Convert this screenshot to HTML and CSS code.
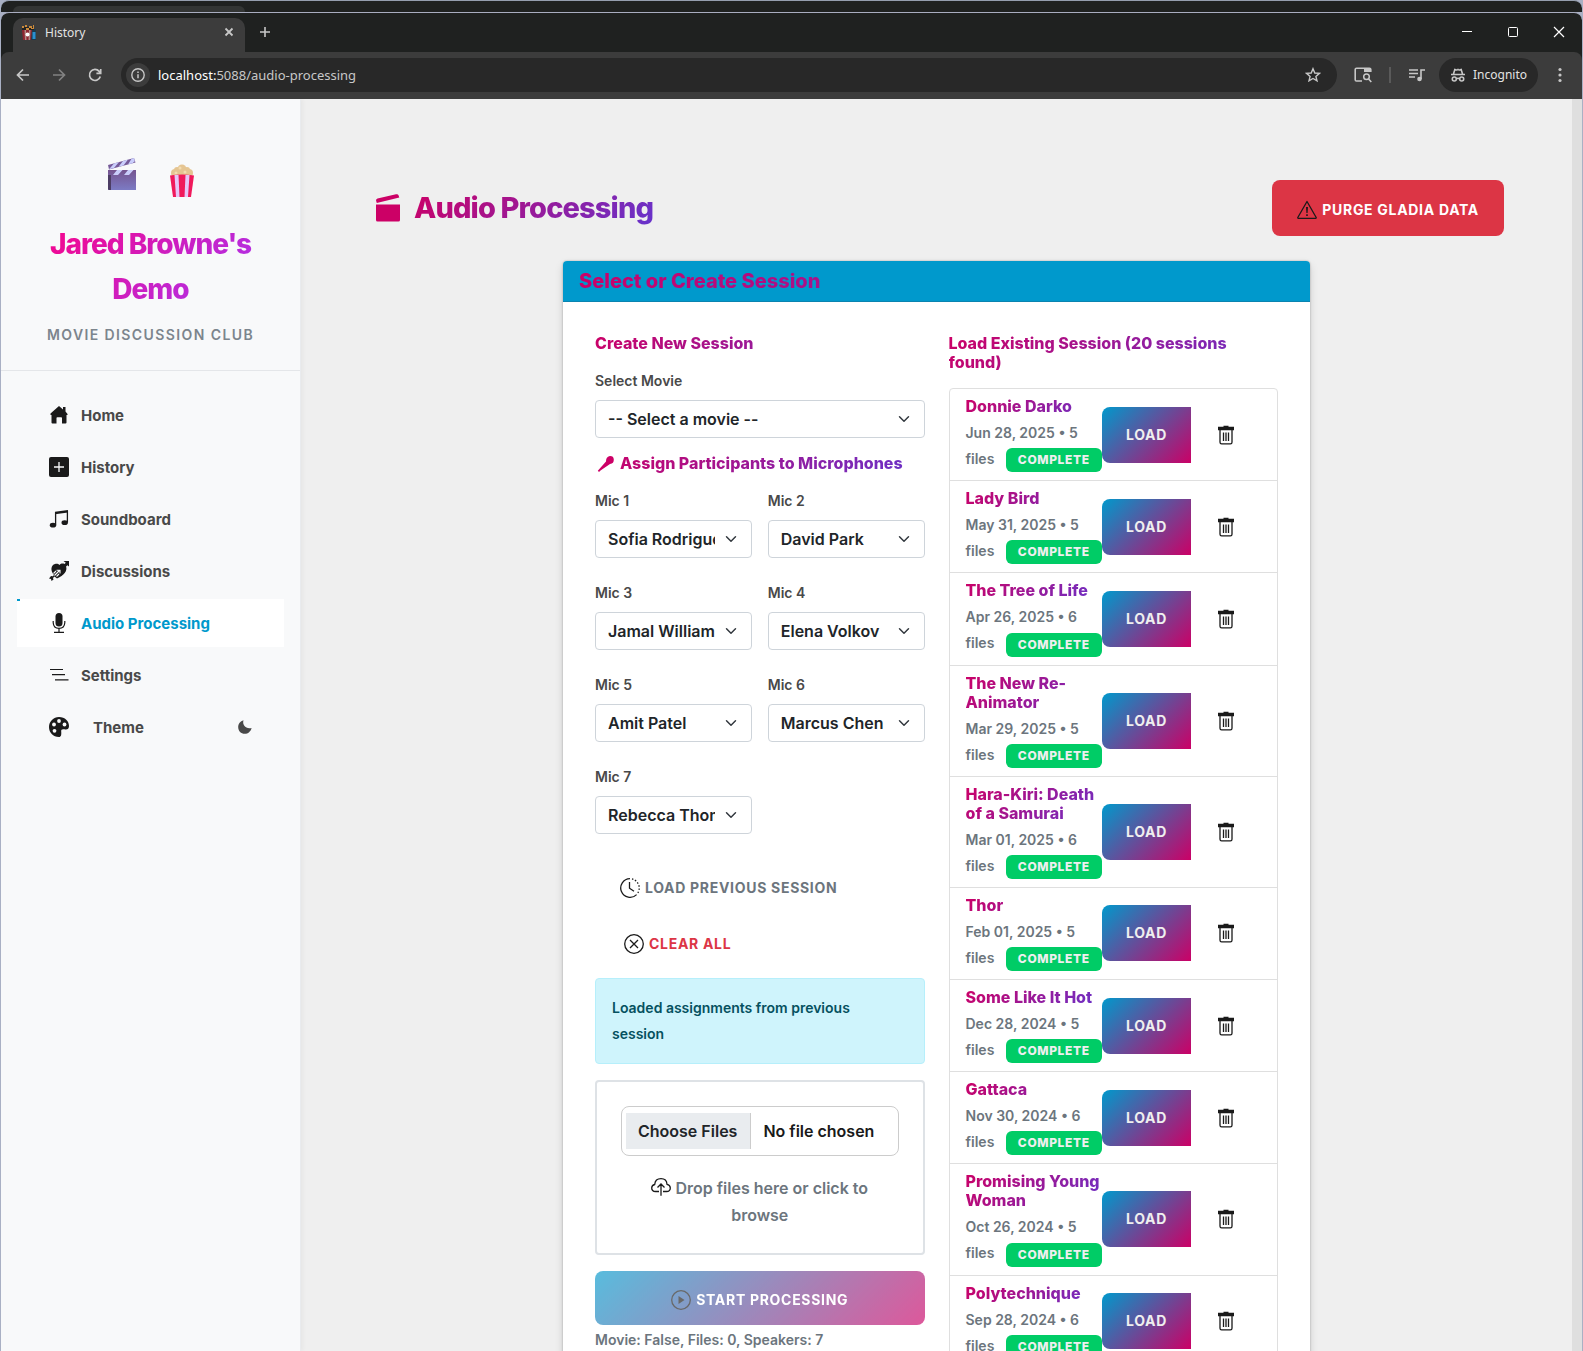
FILE: index.html
```html
<!DOCTYPE html>
<html lang="en">
<head>
<meta charset="utf-8">
<meta name="viewport" content="width=device-width, initial-scale=1">
<title>History</title>
<link rel="stylesheet" href="styles.css">
</head>
<body>
<svg class="sprite" aria-hidden="true">
  <symbol id="trash" viewBox="0 0 20 20">
    <path fill="#1a1a1a" d="M7.500 .800h5v1H18v3.400H2V1.800h5.500z"/>
    <path fill="none" stroke="#1a1a1a" stroke-width="1.300" d="M4 5v12.200q0 1.600 1.600 1.600h8.800q1.600 0 1.600-1.600V5M7.500 7.500v8.500M10 7.500v8.500M12.500 7.500v8.500"/>
  </symbol>
</svg>

<div class="back-window"><div class="back-tab"></div></div>
<div class="window">
  <header class="tabstrip">
    <div class="tab">
      <svg class="i16" viewBox="0 0 16 16"><path fill="#1c3a4c" d="M10 5h5v11h-5z"/><path fill="#2a8fd0" d="M11.500 8h3v7h-3z"/><path fill="#8e2630" d="M1 6h10l-1 10H2z"/><path fill="#b08a86" d="M3.500 6H5l.5 10H4zM8 6h1.500L9 16H7.500z"/><circle cx="6.500" cy="10.500" r="2" fill="#fff"/><path fill="#222" d="M1 3h12v3H1z"/><path fill="#c98a3c" d="M1 2h2v2H1zM4 1h2v2H4zM5 4h3v2H5zM8 2h3v2H8zM12 1h1v4h-1zM10 4h2v1h-2z"/></svg>
      <span class="tab-title">History</span>
      <button class="bare" aria-label="Close tab"><svg class="i12" viewBox="0 0 12 12"><path class="line" stroke-width="1.800" d="M2.500 2.500l7 7M9.500 2.500l-7 7"/></svg></button>
    </div>
    <button class="bare new-tab" aria-label="New tab"><svg class="i12" viewBox="0 0 12 12"><path class="line" stroke-width="1.600" d="M6 1v10M1 6h10"/></svg></button>
    <div class="window-controls">
      <button class="bare" aria-label="Minimize"><svg class="i12" viewBox="0 0 12 12"><path class="line white" d="M1 5.500h10"/></svg></button>
      <button class="bare" aria-label="Maximize"><svg class="i12" viewBox="0 0 12 12"><rect class="line white" x="1.500" y="1.500" width="9" height="9" rx="1"/></svg></button>
      <button class="bare" aria-label="Close"><svg class="i12" viewBox="0 0 12 12"><path class="line white" stroke-width="1.200" d="M1 1l10 10M11 1L1 11"/></svg></button>
    </div>
  </header>
  <div class="toolbar">
    <button class="bare nav-btn" aria-label="Back"><svg class="i16" viewBox="0 0 16 16"><path class="line" stroke-width="1.700" d="M14 8H3M8 2.500L2.500 8 8 13.500"/></svg></button>
    <button class="bare nav-btn dim" aria-label="Forward"><svg class="i16" viewBox="0 0 16 16"><path class="line" stroke-width="1.700" d="M2 8h11M8 2.500L13.500 8 8 13.500"/></svg></button>
    <button class="bare nav-btn" aria-label="Reload"><svg class="i16" viewBox="0 0 16 16"><path class="line" stroke-width="1.700" d="M13.300 9.500A5.500 5.500 0 1 1 12.200 4.400L13.500 6M13.700 2v4.300H9.400"/></svg></button>
    <div class="omnibox">
      <span class="site-info"><svg class="i16" viewBox="0 0 16 16"><circle class="line" cx="8" cy="8" r="6.200" stroke-width="1.400"/><path class="line" stroke-width="1.500" d="M8 7.200v4M8 4.500v1.500"/></svg></span>
      <span class="url"><b>localhost:</b>5088/audio-processing</span>
      <button class="bare" aria-label="Bookmark"><svg class="i16" viewBox="0 0 16 16"><path class="line" stroke-width="1.400" d="M8 1.700l1.800 4.300 4.600.4-3.500 3 1.100 4.500L8 11.500l-4 2.400 1.100-4.500-3.500-3 4.600-.4z"/></svg></button>
    </div>
    <button class="bare side-search" aria-label="Search tabs"><svg class="i18" viewBox="0 0 18 18"><path class="line" stroke-width="1.600" d="M8 15H2.500q-1.300 0-1.300-1.300V3.500Q1.200 2.200 2.500 2.200h13q1.300 0 1.300 1.300V6"/><path fill="#c7c7c7" d="M10 2h7v4h-7z"/><circle class="line" cx="12.500" cy="10.800" r="2.800" stroke-width="1.500"/><path class="line" stroke-width="1.600" d="M14.600 13l2.700 3"/></svg></button>
    <i class="divider"></i>
    <button class="bare media" aria-label="Media"><svg class="i16" viewBox="0 0 16 16"><path class="line" stroke-width="1.600" d="M0 3h9M0 6.500h9M0 10h6M12 12V3h4"/><circle cx="10.500" cy="12" r="2.300" fill="#c7c7c7"/></svg></button>
    <div class="incognito"><svg class="i16" viewBox="0 0 16 16"><path class="line" stroke-width="1.600" d="M1 7.500h14M3.500 7l1.300-4.500q2.200 1 3.200 0 1 1 3.200 0L12.500 7"/><circle class="line" cx="4.300" cy="12" r="2" stroke-width="1.600"/><circle class="line" cx="11.700" cy="12" r="2" stroke-width="1.600"/><path class="line" stroke-width="1.400" d="M6.500 11.800q1.500-1 3 0"/></svg>Incognito</div>
    <button class="bare menu" aria-label="Menu"><svg class="i16" viewBox="0 0 16 16"><g fill="#c7c7c7"><circle cx="8" cy="2.500" r="1.600"/><circle cx="8" cy="8" r="1.600"/><circle cx="8" cy="13.500" r="1.600"/></g></svg></button>
  </div>

  <div class="page">
    <aside class="sidebar">
      <div class="brand">
        <div class="brand-art">
          <svg class="clapper" viewBox="0 0 28 32"><defs><linearGradient id="cg" x1="0" y1="0" x2="0" y2="1"><stop offset="0" stop-color="#75548f"/><stop offset="1" stop-color="#7c7bc4"/></linearGradient></defs><path fill="url(#cg)" d="M0 12h28v20H1q-1 0-1-1z"/><path fill="#4c3d64" d="M0 17h3v15H1q-1 0-1-1z"/><path fill="#765b98" d="M0 7L26 0l1.500 4.500L1 11.500z"/><path fill="#c9cdfb" d="M6 5.500l5-1.400-5 5.800-5 1.300zM15 3l5-1.400-4.500 5.800-5 1.400zM23.500.800L26 0l.8 3.200-2.300 2-4.500 1.200zM9 12h5.500L10 17H5zM20 12h5.500L21 17h-5z"/></svg>
          <svg class="popcorn" viewBox="0 0 24 33"><g fill="#e5c592"><circle cx="5" cy="9" r="4"/><circle cx="12" cy="5" r="4.500"/><circle cx="19" cy="9" r="4"/><circle cx="12" cy="9" r="5"/><circle cx="7" cy="6" r="3"/><circle cx="17" cy="6" r="3"/></g><g fill="#f3dcb0"><circle cx="10" cy="4" r="1.500"/><circle cx="15" cy="8" r="1.500"/><circle cx="6" cy="9" r="1.500"/></g><path fill="#f0195b" d="M0 11.500q12-2 24 0L21 33H3z"/><path fill="#e6c5f8" d="M4.500 11h4L9.500 33H6zM15.500 11h4L18 33h-3.500z"/></svg>
        </div>
        <h2 class="brand-name">Jared Browne's Demo</h2>
        <p class="brand-sub">Movie Discussion Club</p>
      </div>
      <nav class="nav">
        <a href="#"><svg viewBox="0 0 20 20"><path fill="#1a1a1a" d="M10 1l4 3.500V2h2.500v4.500L18.500 9v1h-1v7.500q0 1-1 1H13V13q0-.8-.8-.8H8.300q-.8 0-.8.8v5.500h-4q-1 0-1-1V10h-1V8.500z"/></svg>Home</a>
        <a href="#"><svg viewBox="0 0 20 20"><rect width="20" height="20" rx="2" fill="#1a1a1a"/><path stroke="#f8f9fa" stroke-width="1.300" d="M10 5v10M5 10h10"/></svg>History</a>
        <a href="#"><svg viewBox="0 0 20 20"><path fill="#1a1a1a" d="M6 2.800L19 1v2.500L6 5.200z"/><path fill="none" stroke="#1a1a1a" stroke-width="1.300" d="M6.600 3v13M18.400 2v11.500"/><ellipse cx="4" cy="16.200" rx="3.200" ry="2.400" fill="#1a1a1a"/><ellipse cx="15.700" cy="13.700" rx="3.200" ry="2.400" fill="#1a1a1a"/></svg>Soundboard</a>
        <a href="#"><svg viewBox="0 0 20 20"><path fill="#1a1a1a" d="M14.500 0H20v5.500l-1.600-1.300-1.300 1.300c1.500 4.500-2.100 9-9.100 12l-2.500-2-1.500 1.500.5 1.500L2.500 20l-.5-2-2-.5L2 15l1.800.2L5 14C1 9.500 2 4 6 3c2-.5 3.500 0 4.500 1 1.300-1.300 3-1.800 5-1l1.300-1.300z"/><path fill="none" stroke="#f8f9fa" stroke-width="1.100" d="M4.500 12.500L7 10M7.500 15.500L10 13M5.500 14.500l5-5M7.500 9.200H11v3.300"/></svg>Discussions</a>
        <a href="#" class="active" aria-current="page"><svg viewBox="0 0 20 20"><rect x="6.500" y="0" width="7" height="13.500" rx="3.500" fill="#1a1a1a"/><path fill="none" stroke="#1a1a1a" stroke-width="1.200" d="M4.200 8v1.800q.3 5.600 5.800 5.600t5.800-5.600V8M10 15.500v4M5 19.400h10"/></svg>Audio Processing</a>
        <a href="#"><svg viewBox="0 0 20 20"><path stroke="#1a1a1a" stroke-width="1.200" d="M1 4.500h13M3 9.700h13M6 14.900h13.500"/></svg>Settings</a>
        <a href="#" class="theme"><svg viewBox="0 0 20 20"><path fill="#1a1a1a" d="M10 0c6 0 10 4 10 9 0 3-2 4-4.500 3.300-2.500-.5-3.500.2-3.300 2.200.3 3 0 5.500-2.200 5.500C4 20 0 15.500 0 10S4.500 0 10 0z"/><g fill="#f8f9fa"><circle cx="10" cy="4" r="1.900"/><circle cx="5" cy="7.500" r="1.900"/><circle cx="15.500" cy="7.500" r="1.900"/><circle cx="5.500" cy="13.800" r="1.900"/></g></svg><span>Theme</span><svg class="moon" viewBox="0 0 14 14"><path fill="#494949" d="M5.500.3C4 4.800 8 9.500 13.600 8 12.800 11.500 10 13.800 6.800 13.800 3 13.800.2 10.800.2 7.200.2 4 2.300 1.200 5.500.3z"/></svg></a>
      </nav>
    </aside>

    <main class="main">
      <div class="page-head">
        <h1><svg viewBox="0 0 24 28"><path fill="#cc0066" d="M0 6.500Q0 5 1.500 4.600L20 .3q2-.5 2.500 1l.8 2.200L.800 9zM0 10.500h24V26q0 1.500-1.500 1.500h-21Q0 27.500 0 26z"/></svg><span class="grad">Audio Processing</span></h1>
        <button class="btn btn-danger"><svg class="i20" viewBox="0 0 20 20"><path fill="none" stroke="#1a1a1a" stroke-width="1.300" stroke-linejoin="round" d="M10 1.500l9.200 16q.2.800-.6.800H1.400q-.8 0-.6-.8z"/><path fill="#1a1a1a" d="M9 7h2l-.4 6H9.400zM9.200 14.200h1.600v1.700H9.200z"/></svg>Purge Gladia Data</button>
      </div>

      <section class="card">
        <header class="card-header"><h2 class="grad">Select or Create Session</h2></header>
        <div class="card-body">
          <form class="create">
            <h3 class="grad">Create New Session</h3>
            <div class="field">
              <label for="movie">Select Movie</label>
              <select id="movie"><option>-- Select a movie --</option></select>
            </div>
            <h3 class="grad mic-head"><svg class="i20" viewBox="0 0 20 20"><path fill="#cc0066" d="M18.800 5.500Q19 9.500 15 10L5.500 16.500 4 18 2.800 16.800 11 7.500Q11 3 14 2.200q4.600-.6 4.800 3.300z"/></svg>Assign Participants to Microphones</h3>
            <div class="mics">
              <div class="field"><label for="m1">Mic 1</label><select id="m1"><option>Sofia Rodriguez</option></select></div>
              <div class="field"><label for="m2">Mic 2</label><select id="m2"><option>David Park</option></select></div>
              <div class="field"><label for="m3">Mic 3</label><select id="m3"><option>Jamal Williams</option></select></div>
              <div class="field"><label for="m4">Mic 4</label><select id="m4"><option>Elena Volkov</option></select></div>
              <div class="field"><label for="m5">Mic 5</label><select id="m5"><option>Amit Patel</option></select></div>
              <div class="field"><label for="m6">Mic 6</label><select id="m6"><option>Marcus Chen</option></select></div>
              <div class="field"><label for="m7">Mic 7</label><select id="m7"><option>Rebecca Thompson</option></select></div>
            </div>
            <div class="actions">
              <button type="button" class="btn btn-plain"><svg class="i20" viewBox="0 0 20 20"><path fill="none" stroke="#1a1a1a" stroke-width="1.300" d="M10 .700A9.300 9.300 0 1 0 16.600 16.600M9.500 4v6.200l4.500 3"/><path fill="none" stroke="#1a1a1a" stroke-width="1.300" stroke-dasharray="1.500 1.700" d="M12 .900A9.300 9.300 0 0 1 17 16"/></svg>Load Previous Session</button>
              <button type="button" class="btn btn-plain btn-clear"><svg class="i20" viewBox="0 0 20 20"><circle cx="10" cy="10" r="9.300" fill="none" stroke="#1a1a1a" stroke-width="1.300"/><path stroke="#1a1a1a" stroke-width="1.300" d="M6 6l8 8M14 6l-8 8"/></svg>Clear All</button>
            </div>
            <div class="alert" role="status">Loaded assignments from previous session</div>
            <div class="dropzone">
              <input type="file" multiple aria-label="Audio files">
              <p><svg class="i20" viewBox="0 0 20 20"><path fill="none" stroke="#1a1a1a" stroke-width="1.300" d="M8 14.500H4.500C2 14.500.7 12.800.7 11q0-2.800 3-3.500C4 4 6.500 1.700 10 1.700S15.800 4 16 7.300q3.300.7 3.300 3.700 0 3.500-3.800 3.500H12M10 18.800V7.200M6.500 10.500L10 7l3.500 3.500"/></svg> Drop files here or click to browse</p>
            </div>
            <button type="button" class="btn btn-start" disabled><svg class="i20" viewBox="0 0 20 20"><circle cx="10" cy="10" r="9.300" fill="none" stroke="#1a1a1a" stroke-width="1.300"/><path fill="#1a1a1a" d="M7.500 6l6 4-6 4z"/></svg>Start Processing</button>
            <p class="status">Movie: False, Files: 0, Speakers: 7</p>
          </form>

          <section class="existing">
            <h3 class="grad">Load Existing Session (20 sessions found)</h3>
            <ul class="sessions">
              <li><div><h4 class="grad">Donnie Darko</h4><p>Jun 28, 2025 • 5 files <span class="badge">Complete</span></p></div><button class="btn btn-load">Load</button><button class="btn btn-del" aria-label="Delete"><svg class="i20"><use href="#trash"/></svg></button></li>
              <li><div><h4 class="grad">Lady Bird</h4><p>May 31, 2025 • 5 files <span class="badge">Complete</span></p></div><button class="btn btn-load">Load</button><button class="btn btn-del" aria-label="Delete"><svg class="i20"><use href="#trash"/></svg></button></li>
              <li><div><h4 class="grad">The Tree of Life</h4><p>Apr 26, 2025 • 6 files <span class="badge">Complete</span></p></div><button class="btn btn-load">Load</button><button class="btn btn-del" aria-label="Delete"><svg class="i20"><use href="#trash"/></svg></button></li>
              <li><div><h4 class="grad">The New Re-Animator</h4><p>Mar 29, 2025 • 5 files <span class="badge">Complete</span></p></div><button class="btn btn-load">Load</button><button class="btn btn-del" aria-label="Delete"><svg class="i20"><use href="#trash"/></svg></button></li>
              <li><div><h4 class="grad">Hara-Kiri: Death of a Samurai</h4><p>Mar 01, 2025 • 6 files <span class="badge">Complete</span></p></div><button class="btn btn-load">Load</button><button class="btn btn-del" aria-label="Delete"><svg class="i20"><use href="#trash"/></svg></button></li>
              <li><div><h4 class="grad">Thor</h4><p>Feb 01, 2025 • 5 files <span class="badge">Complete</span></p></div><button class="btn btn-load">Load</button><button class="btn btn-del" aria-label="Delete"><svg class="i20"><use href="#trash"/></svg></button></li>
              <li><div><h4 class="grad">Some Like It Hot</h4><p>Dec 28, 2024 • 5 files <span class="badge">Complete</span></p></div><button class="btn btn-load">Load</button><button class="btn btn-del" aria-label="Delete"><svg class="i20"><use href="#trash"/></svg></button></li>
              <li><div><h4 class="grad">Gattaca</h4><p>Nov 30, 2024 • 6 files <span class="badge">Complete</span></p></div><button class="btn btn-load">Load</button><button class="btn btn-del" aria-label="Delete"><svg class="i20"><use href="#trash"/></svg></button></li>
              <li><div><h4 class="grad">Promising Young Woman</h4><p>Oct 26, 2024 • 5 files <span class="badge">Complete</span></p></div><button class="btn btn-load">Load</button><button class="btn btn-del" aria-label="Delete"><svg class="i20"><use href="#trash"/></svg></button></li>
              <li><div><h4 class="grad">Polytechnique</h4><p>Sep 28, 2024 • 6 files <span class="badge">Complete</span></p></div><button class="btn btn-load">Load</button><button class="btn btn-del" aria-label="Delete"><svg class="i20"><use href="#trash"/></svg></button></li>
            </ul>
          </section>
        </div>
      </section>
    </main>
  </div>
</div>
</body>
</html>
```
FILE: styles.css
```css
* { box-sizing: border-box; }
h1, h2, h3, h4, p, ul { margin: 0; padding: 0; }
body {
  margin: 0;
  height: 100vh;
  overflow: hidden;
  display: flex;
  flex-direction: column;
  background: #a9b0c4;
  font-family: Inter, "Liberation Sans", sans-serif;
  font-size: 16px;
  font-weight: 600;
  color: #1a1a1a;
}
svg { display: block; flex: none; }
.sprite { position: absolute; width: 0; height: 0; }
.i12 { width: 12px; height: 12px; }
.i16 { width: 16px; height: 16px; }
.i18 { width: 18px; height: 18px; }
.i20 { width: 20px; height: 20px; }

/* Browser frame */
.back-window {
  height: 12px;
  flex: none;
  margin: 0 1px;
  border-top: 1px solid #959eae;
  border-radius: 8px 8px 0 0;
  background: #1f2120;
  padding: 5px 12px 0;
}
.back-tab { width: 232px; height: 6px; background: #333534; border-radius: 8px 8px 0 0; }
.window {
  flex: 1;
  min-height: 0;
  display: flex;
  flex-direction: column;
  margin: 0 1px;
  border-top: 1px solid #a9adc0;
  border-radius: 8px 8px 0 0;
  background: #1f2120;
  overflow: hidden;
}
.line { fill: none; stroke: #c7c7c7; }
.line.white { stroke: #fff; }
.bare { display: flex; align-items: center; justify-content: center; border: 0; padding: 0; background: none; }
.tabstrip {
  height: 39px;
  flex: none;
  display: flex;
  align-items: flex-start;
  padding-left: 12px;
  font-family: "Noto Sans", sans-serif;
  font-weight: 400;
}
.tab {
  width: 232px;
  height: 34px;
  display: flex;
  align-items: center;
  gap: 8px;
  margin-top: 5px;
  padding: 0 10px 6px 8px;
  border-radius: 10px 10px 0 0;
  background: #3c3c3c;
  color: #e3e3e3;
  font-size: 12px;
}
.tab-title { flex: 1; }
.new-tab { width: 40px; height: 38px; }
.window-controls { margin-left: auto; display: flex; }
.window-controls .bare { width: 46px; height: 38px; }
.toolbar {
  height: 47px;
  flex: none;
  display: flex;
  align-items: center;
  padding: 0 4px 2px;
  border-radius: 8px 8px 0 0;
  background: #3c3c3c;
  font-family: "Noto Sans", sans-serif;
  font-weight: 400;
}
.nav-btn { width: 36px; height: 34px; }
.dim { opacity: .5; }
.omnibox {
  flex: 1;
  display: flex;
  align-items: center;
  gap: 8px;
  height: 34px;
  margin-left: 8px;
  padding: 0 16px 0 5px;
  border-radius: 17px;
  background: #282828;
  font-size: 13px;
  color: #c7c7c7;
}
.site-info { width: 24px; height: 24px; display: grid; place-items: center; border-radius: 50%; background: #3c3c3c; }
.url { flex: 1; }
.url b { font-weight: 400; color: #fff; }
.side-search { margin-left: 17px; }
.divider { width: 2px; height: 16px; margin: 0 18px 0 17px; background: #5a5a5a; }
.incognito {
  display: flex;
  align-items: center;
  gap: 7px;
  height: 34px;
  margin-left: 14px;
  padding: 0 11px;
  border-radius: 17px;
  background: #282828;
  color: #e3e3e3;
  font-size: 12px;
}
.menu { width: 36px; margin-left: 4px; }

/* App shell */
.page { flex: 1; min-height: 0; display: flex; background: #efefef; border-right: 10px solid #dfdfdf; overflow: hidden; }
.sidebar { width: 300px; flex: none; background: #f8f9fa; border-right: 1px solid #e9ebee; box-shadow: 2px 0 4px rgba(0, 0, 0, .04); }
.brand { padding: 48px 16px 24px; border-bottom: 1px solid #e4e6e9; text-align: center; }
.brand-art { display: flex; justify-content: center; align-items: center; gap: 34px; height: 60px; margin-bottom: 15px; }
.clapper { width: 28px; height: 32px; margin-bottom: 6px; }
.popcorn { width: 24px; height: 33px; margin-top: 6px; }
.brand-name {
  font-size: 28px;
  line-height: 45px;
  font-weight: 800;
  letter-spacing: -1px;
  background: linear-gradient(135deg, #ff0080, #9d3cff);
  -webkit-background-clip: text;
  background-clip: text;
  color: transparent;
}
.brand-sub { margin-top: 12px; font-size: 14px; line-height: 22px; letter-spacing: .1em; text-transform: uppercase; color: #7c858d; }
.nav { display: flex; flex-direction: column; gap: 4px; padding: 20px 16px; }
.nav a {
  display: flex;
  align-items: center;
  gap: 12px;
  height: 48px;
  padding: 0 32px;
  color: #494949;
  font-size: 15px;
  font-weight: 650;
  text-decoration: none;
}
.nav svg { width: 20px; height: 20px; }
.nav .active { background: linear-gradient(#09c, #09c) 0 0 / 3px 2px no-repeat #fff; color: #09c; }
.theme span { flex: 1; padding-left: 12px; }
.nav .moon { width: 14px; height: 14px; }

.main { flex: 1; min-width: 0; padding: 81px 68px 0; }
.grad {
  background: linear-gradient(135deg, #cc0066, #6633cc);
  -webkit-background-clip: text;
  background-clip: text;
  color: transparent;
  font-weight: 800;
}
.page-head { display: flex; align-items: center; justify-content: space-between; margin-bottom: 25px; }
h1 { display: flex; align-items: center; gap: 14px; padding-left: 7px; font-size: 29px; line-height: 36px; letter-spacing: -.03em; }
h1 svg { width: 24px; height: 28px; }

.btn {
  display: inline-flex;
  align-items: center;
  justify-content: center;
  gap: 5px;
  height: 56px;
  padding: 0 25px;
  border: 0;
  border-radius: 8px;
  background: none;
  font: 650 14px/24px Inter, "Liberation Sans", sans-serif;
  letter-spacing: .05em;
  text-transform: uppercase;
}
.btn-danger { padding: 4px 25px 0; background: #dc3545; color: #fff; font-weight: 700; }
.btn-plain { color: #6c757d; }
.btn-clear { margin-left: 4px; color: #dc3545; }

/* Session card */
.card { width: 66%; max-width: 747px; margin: 0 auto; border-radius: 4px; background: #fff; box-shadow: 0 0 2px rgba(0, 0, 0, .3), 0 4px 8px rgba(0, 0, 0, .15); }
.card-header { padding: 8px 16px; border-bottom: 1px solid #0a84b0; border-radius: 4px 4px 0 0; background: #09c; }
.card-header h2 { font-size: 20px; line-height: 24px; }
.card-body { display: grid; grid-template-columns: minmax(0, 1fr) minmax(0, 1fr); gap: 24px; padding: 32px; }
h3 { margin-bottom: 16px; font-size: 16px; line-height: 19px; }
.mic-head { display: flex; align-items: center; gap: 5px; height: 19px; margin-top: 16px; }
.field label { display: block; margin-bottom: 8px; font-size: 14px; line-height: 23px; color: #494949; }
select {
  display: block;
  width: 100%;
  height: 38px;
  padding: 6px 36px 6px 12px;
  border: 1px solid #ced4da;
  border-radius: 4px;
  appearance: none;
  background: #fff url("data:image/svg+xml,%3Csvg xmlns='http://www.w3.org/2000/svg' viewBox='0 0 16 16'%3E%3Cpath fill='none' stroke='%23343a40' stroke-linecap='round' stroke-linejoin='round' stroke-width='2' d='M2 5l6 6 6-6'/%3E%3C/svg%3E") right 12px center / 16px 12px no-repeat;
  font: 600 16px/24px Inter, "Liberation Sans", sans-serif;
  color: #212529;
}
.mics { display: grid; grid-template-columns: minmax(0, 1fr) minmax(0, 1fr); gap: 23px 16px; }
.actions { display: flex; flex-direction: column; align-items: flex-start; margin: 26px 0 6px; }
.alert { padding: 16px 48px 16px 16px; border: 1px solid #b6effb; border-radius: 4px; background: #cff4fc; color: #055160; font-size: 14px; line-height: 26px; }
.dropzone { margin: 16px 0; padding: 24px; border: 2px solid #dee2e6; border-radius: 4px; text-align: center; }
.dropzone input {
  display: block;
  width: 100%;
  height: 50px;
  padding: 6px 4px;
  border: 1px solid #ccc;
  border-radius: 8px;
  font: 600 16px/24px Inter, "Liberation Sans", sans-serif;
  color: #1a1a1a;
}
.dropzone input::file-selector-button {
  height: 36px;
  margin: 0 12px 0 0;
  padding: 6px 13px 6px 12px;
  border: 0;
  border-right: 1px solid #ccc;
  background: #e9ecef;
  color: #212529;
  font: inherit;
}
.dropzone p { margin-top: 19px; line-height: 27px; color: #6c757d; }
.dropzone svg { display: inline-block; vertical-align: -3px; }
.btn-start { display: flex; width: 100%; height: 54px; padding-top: 3px; background: linear-gradient(135deg, #09c, #c06); color: #fff; opacity: .65; font-weight: 700; }
.status { margin-top: 4px; font-size: 14px; line-height: 22px; color: #6c757d; }

.sessions { border: 1px solid #dfdfdf; border-radius: 4px; list-style: none; }
.sessions li { display: flex; align-items: center; padding: 8px 16px; border-bottom: 1px solid #dfdfdf; }
.sessions li > div { flex: 1; min-width: 0; }
.sessions h4 { margin-bottom: 4px; font-size: 16px; line-height: 19px; }
.sessions p { font-size: 14px; line-height: 26px; color: #6c757d; }
.badge {
  display: inline-block;
  height: 24px;
  margin-left: 8px;
  padding: 0 12px;
  border-radius: 6px;
  background: #0c6;
  color: #efefef;
  font-size: 12px;
  line-height: 24px;
  font-weight: 800;
  letter-spacing: .05em;
  text-transform: uppercase;
  vertical-align: middle;
}
.btn-load { padding: 0 24px; border-radius: 8px 0 0 8px; background: linear-gradient(135deg, #09c, #c06); color: #efefef; font-weight: 700; }
.btn-del { padding: 0 25px; }
```
